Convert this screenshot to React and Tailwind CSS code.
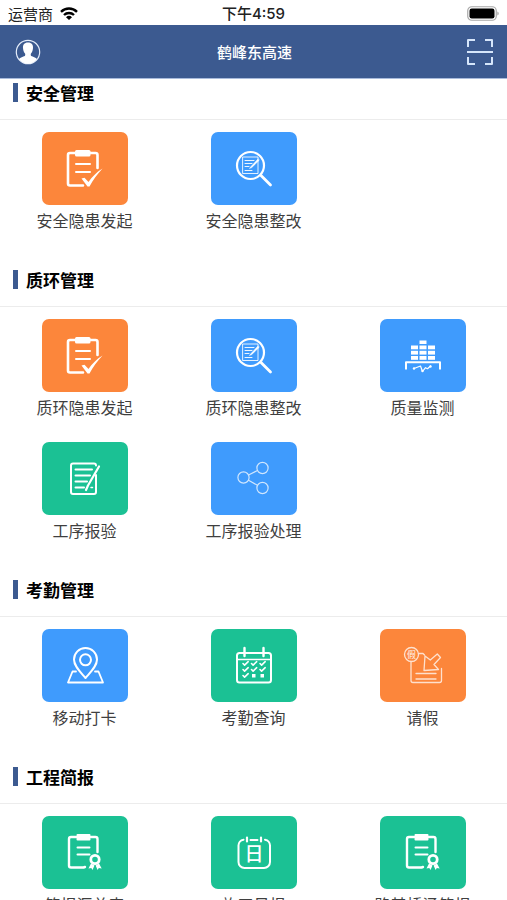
import React from "react";

const ORANGE = "bg-[#fc863b]";
const BLUE = "bg-[#3f9bfd]";
const GREEN = "bg-[#1bc194]";

function Art({ children, width = 2 }) {
  return (
    <svg
      viewBox="0 0 86 73"
      className="h-[73px] w-[86px]"
      fill="none"
      stroke="white"
      strokeWidth={width}
      strokeLinecap="round"
      strokeLinejoin="round"
      aria-hidden="true"
    >
      {children}
    </svg>
  );
}

function ClipboardCheck() {
  return (
    <Art>
      <path d="M34 21H28a2 2 0 0 0-2 2v28.500a2 2 0 0 0 2 2H41M48 21h5.500a2 2 0 0 1 2 2V36" strokeWidth="2.600" />
      <rect x="33" y="18" width="15.500" height="6.500" rx="1.500" fill="white" stroke="none" />
      <path d="M34 32h14M34 40h14" />
      <path d="M39.500 46.500l3-.8 4 4.300C50 45 54 40.500 60.500 36.500 55 42.500 51 48 47.500 54.500h-2z" fill="white" stroke="none" />
    </Art>
  );
}

function InspectDoc() {
  return (
    <Art width={1}>
      <circle cx="39.500" cy="33.500" r="13.500" strokeWidth="2.200" />
      <path d="M50 43.500l9.500 9.500" strokeWidth="2.800" />
      <rect x="32" y="25" width="15" height="16.500" opacity="0.85" />
      <path d="M34 28.500h9M34 31.500h7M34 34.500h4M34 38.500h7" opacity="0.9" />
      <path d="M47 27l-7 7.500-1.500 2 2.300-1L48 28.500z" fill="white" strokeWidth="0.500" />
    </Art>
  );
}

function Monitoring() {
  return (
    <Art>
      <g fill="white" stroke="none">
        <rect x="39.500" y="21.500" width="7" height="3.500" />
        {[26.5, 31.8, 37].map((y) => (
          <g key={y}>
            <rect x="31" y={y} width="7" height="3.800" />
            <rect x="39.500" y={y} width="7" height="3.800" />
            <rect x="48" y={y} width="7" height="3.800" />
          </g>
        ))}
      </g>
      <path d="M26 50.500V43.200h34v7.300" strokeLinecap="butt" />
      <path d="M34 49.500l6.500-2.500 2 5.500 3-3.800 2 1L50.500 47" strokeWidth="1.200" />
      <g fill="white" stroke="none">
        <circle cx="34" cy="49.500" r="1.200" />
        <circle cx="42.500" cy="52" r="1.200" />
        <circle cx="50.500" cy="47.500" r="1.200" />
      </g>
    </Art>
  );
}

function DocPen() {
  return (
    <Art>
      <path d="M54 23.500a2 2 0 0 0-2-2H31a2 2 0 0 0-2 2V50a2 2 0 0 0 2 2h21a2 2 0 0 0 2-2V33" />
      <path d="M33.500 27.500H50M33.500 33.500H48M33.500 39.500H45M33.500 45.500H42" />
      <path d="M57 24.500L46 43.500l-2 4.500" strokeWidth="2.200" />
      <path d="M49 45.500h1.500" strokeWidth="1.500" />
    </Art>
  );
}

function ShareNodes() {
  return (
    <Art width={1.2}>
      <g opacity="0.75">
        <circle cx="32.500" cy="35.500" r="5.600" />
        <circle cx="51.500" cy="26" r="5.600" />
        <circle cx="51.500" cy="46" r="5.600" />
        <path d="M37.500 33l9-4.500M37.500 38.300l9 5" />
      </g>
    </Art>
  );
}

function MapPin() {
  return (
    <Art>
      <path d="M43.500 49C38 42.500 32 37 32 30.500a11.500 11.500 0 0 1 23 0C55 37 49 42.500 43.500 49z" />
      <circle cx="43.500" cy="30.800" r="5.500" />
      <path d="M34 42.500h-3.500l-4.500 11h35l-4.500-11H53" strokeWidth="1.800" />
    </Art>
  );
}

function CalendarChecks() {
  return (
    <Art>
      <rect x="26" y="24" width="34" height="29.500" rx="2.500" />
      <path d="M26 30.500h34" strokeWidth="1.500" />
      <path d="M33.500 19v8M52.500 19v8" strokeWidth="2.400" />
      {[
        [32, 34.5], [40.5, 34.5], [49, 34.5],
        [32, 40.5], [40.5, 40.5], [49, 40.5],
        [32, 46.5],
      ].map(([x, y]) => (
        <path key={`${x}-${y}`} d={`M${x} ${y}l1.600 1.600 3.600-3.400`} strokeWidth="1.600" />
      ))}
      <g fill="white" stroke="none">
        <rect x="41" y="45" width="3.500" height="3.500" />
        <rect x="49.500" y="45" width="3.500" height="3.500" />
      </g>
    </Art>
  );
}

function LeaveNote() {
  return (
    <Art width={1.3}>
      <g opacity="0.75">
        <circle cx="31.500" cy="25.500" r="7" />
        <path d="M31 32.500V51.500a2 2 0 0 0 2 2h26.500a2 2 0 0 0 2-2V39.500M38.500 24.500H43l1.500 1.500" />
        <path d="M45 27l-1 14.500 14.500-1-4.500-5 6.500-7-3.200-3.500-7 6z" />
        <path d="M36 44.500h20M36 50h20" />
        <text
          x="31.500"
          y="28.800"
          textAnchor="middle"
          fill="white"
          stroke="none"
          className="text-[9px] font-medium"
        >
          假
        </text>
      </g>
    </Art>
  );
}

function ClipboardMedal() {
  return (
    <Art>
      <path d="M34 21h-5a2 2 0 0 0-2 2v26.500a2 2 0 0 0 2 2h12.500l1.500-.5M49 21h4.500a2 2 0 0 1 2 2v13" strokeWidth="2.400" />
      <rect x="34.500" y="18" width="14" height="6.500" rx="1" fill="white" stroke="none" />
      <path d="M35.500 31.500h12M35.500 38.500h12" />
      <circle cx="53" cy="43.500" r="4.200" strokeWidth="2.800" />
      <path d="M49 47.500l-2.500 5 2.800-.5 1.200 2 2-4.500zM57 47.500l2.700 5-2.900-.5-1.200 2-2-4.500z" fill="white" stroke="none" />
    </Art>
  );
}

function DayCalendar() {
  return (
    <Art>
      <path d="M32.500 23.700a6 6 0 0 0-5 6.300v16a6 6 0 0 0 6 6H53a6 6 0 0 0 6-6V30a6 6 0 0 0-5-6.300M39.500 24h7" />
      <path d="M36 21.500v4M50 21.500v4" strokeWidth="2.200" />
      <text x="43" y="45" textAnchor="middle" fill="white" stroke="none" className="text-[19px] font-medium">
        日
      </text>
    </Art>
  );
}

const sections = [
  {
    title: "安全管理",
    items: [
      { label: "安全隐患发起", color: ORANGE, icon: ClipboardCheck },
      { label: "安全隐患整改", color: BLUE, icon: InspectDoc },
    ],
  },
  {
    title: "质环管理",
    items: [
      { label: "质环隐患发起", color: ORANGE, icon: ClipboardCheck },
      { label: "质环隐患整改", color: BLUE, icon: InspectDoc },
      { label: "质量监测", color: BLUE, icon: Monitoring },
      { label: "工序报验", color: GREEN, icon: DocPen },
      { label: "工序报验处理", color: BLUE, icon: ShareNodes },
    ],
  },
  {
    title: "考勤管理",
    items: [
      { label: "移动打卡", color: BLUE, icon: MapPin },
      { label: "考勤查询", color: GREEN, icon: CalendarChecks },
      { label: "请假", color: ORANGE, icon: LeaveNote },
    ],
  },
  {
    title: "工程简报",
    items: [
      { label: "简报汇总表", color: GREEN, icon: ClipboardMedal },
      { label: "施工日报", color: GREEN, icon: DayCalendar },
      { label: "路基桥涵简报", color: GREEN, icon: ClipboardMedal },
    ],
  },
];

function StatusBar() {
  return (
    <div className="grid h-[25px] shrink-0 grid-cols-3 items-center px-2 pt-0.5 text-[15px] leading-5 text-[#222]">
      <div className="flex items-center gap-[7px]">
        <span>运营商</span>
        <svg viewBox="0 0 18 13" className="h-[13px] w-[18px]" fill="none" stroke="black" strokeWidth="2.400" aria-hidden="true">
          <path d="M1 4.800a11.500 11.500 0 0 1 16 0M4 8a7.200 7.200 0 0 1 10 0" />
          <path d="M9 13L6 10.200a4.400 4.400 0 0 1 6 0z" fill="black" stroke="none" />
        </svg>
      </div>
      <div className="text-center font-['Inter','Noto_Sans_CJK_SC',sans-serif] text-[15px] font-medium">下午4:59</div>
      <svg viewBox="0 0 32 15" className="h-[15px] w-8 justify-self-end" aria-hidden="true">
        <rect x="0.750" y="0.750" width="28.500" height="13.500" rx="4" fill="none" stroke="#a8a8a8" strokeWidth="1.200" />
        <rect x="2.500" y="2.500" width="25" height="10" rx="2.200" fill="black" />
        <path d="M30.500 5.500c1.400.5 1.400 3.500 0 4z" fill="#8a8a8a" />
      </svg>
    </div>
  );
}

function AppHeader() {
  return (
    <header className="flex h-[54px] shrink-0 items-center justify-between border-b border-[#a9bbdc] bg-[#3c5a90] pr-[13px] pl-[15px] text-white">
      <button type="button" aria-label="个人中心" className="w-7">
        <svg viewBox="0 0 26 26" className="size-[26px]" aria-hidden="true">
          <circle cx="13" cy="13" r="11.700" fill="none" stroke="#e6eefb" strokeWidth="1.200" />
          <path
            d="M13 3.500c3.800 0 5.300 2.300 5 5.600-.2 2.600-.9 4.100-2 5.400-.4.500-.3 2.100.2 2.500 1.600.9 4.600 1.300 5.800 3A11.500 11.500 0 0 1 13 24.700 11.500 11.500 0 0 1 4 20c1.200-1.700 4.200-2.100 5.800-3 .5-.4.6-2 .2-2.500-1.100-1.300-1.800-2.800-2-5.400-.3-3.300 1.200-5.600 5-5.600z"
            fill="white"
          />
        </svg>
      </button>
      <h1 className="text-[15px] leading-5 font-medium">鹤峰东高速</h1>
      <button type="button" aria-label="扫一扫" className="w-7">
        <svg viewBox="0 0 28 28" className="size-7" fill="none" stroke="#d6e6fb" strokeWidth="2" strokeLinejoin="round" aria-hidden="true">
          <path d="M2 9V2h7M19 2h7v7M2 19v7h7M19 26h7v-7M1 14h26" />
        </svg>
      </button>
    </header>
  );
}

function Section({ title, items }) {
  return (
    <section className="mb-[31px]">
      <div className="flex h-[41px] items-start gap-2 border-b border-[#ececec] pt-1 pl-[13px]">
        <span className="h-[19px] w-[5px] bg-[#3c5a90]" />
        <h2 className="text-[17px] leading-5 font-bold text-black">{title}</h2>
      </div>
      <div className="grid grid-cols-3 gap-y-5 pt-3">
        {items.map(({ label, color, icon: Icon }) => (
          <button key={label} type="button" className="flex flex-col items-center">
            <span className={`rounded-[7px] ${color}`}>
              <Icon />
            </span>
            <span className="text-base leading-[30px] text-[#3f3f3f]">{label}</span>
          </button>
        ))}
      </div>
    </section>
  );
}

export default function App() {
  return (
    <div className="flex h-screen flex-col bg-white font-['Noto_Sans_CJK_SC',sans-serif]">
      <StatusBar />
      <AppHeader />
      <main className="min-h-0 flex-1 overflow-y-auto [scrollbar-width:none]">
        {sections.map((section) => (
          <Section key={section.title} {...section} />
        ))}
      </main>
    </div>
  );
}
